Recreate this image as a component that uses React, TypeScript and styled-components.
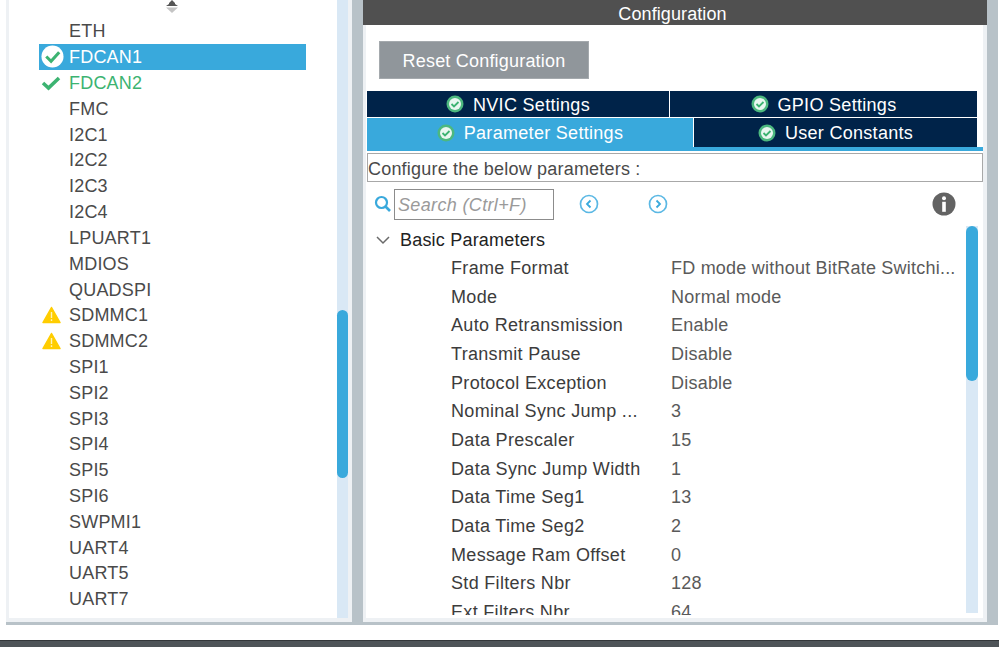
import styled, { createGlobalStyle } from 'styled-components';

const GlobalStyle = createGlobalStyle`
  html, body {
    margin: 0;
    padding: 0;
    background: #fff;
  }
  body {
    font-family: 'Liberation Sans', Arial, sans-serif;
  }
`;

const Page = styled.div`
  width: 999px;
  height: 647px;
  display: flex;
  flex-direction: column;
  overflow: hidden;
  background: #fff;
`;

const Workspace = styled.div`
  height: 625px;
  margin: 0 1px 0 6px;
  display: flex;
  background: #b8c2c8;
  padding-bottom: 3px;
  box-sizing: border-box;
`;

const BottomBar = styled.div`
  margin-top: 15px;
  height: 7px;
  background: #4e5458;
  border-top: 1px solid #33373a;
  box-sizing: border-box;
`;

const LeftPanel = styled.aside`
  width: 346px;
  background: #fff;
  border-left: 3px solid #eef1f4;
  border-bottom: 4px solid #eef1f4;
  box-sizing: border-box;
  display: flex;
  position: relative;
`;

const SortHandle = styled.svg`
  position: absolute;
  left: 151px;
  top: 0;
`;

const PeripheralList = styled.ul`
  flex: 1;
  list-style: none;
  margin: 0;
  padding: 18px 0 0 30px;
  overflow: hidden;
`;

const PeripheralRow = styled.li<{ $selected?: boolean; $done?: boolean }>`
  width: 267px;
  height: 25.82px;
  display: flex;
  align-items: center;
  font-size: 18px;
  letter-spacing: 0.2px;
  white-space: nowrap;
  background: ${(p) => (p.$selected ? '#39a9dc' : 'transparent')};
  color: ${(p) => (p.$selected ? '#fff' : p.$done ? '#3cb371' : '#4a4a4a')};
`;

const RowLabel = styled.span`
  padding-top: 2px;
`;

const StatusSlot = styled.span`
  width: 30px;
  flex: none;
  padding-left: 2px;
  box-sizing: border-box;
  display: flex;
  align-items: center;
`;

const ScrollTrack = styled.div<{ $width: number }>`
  width: ${(p) => p.$width}px;
  flex: none;
  background: #d9e8f5;
  position: relative;
`;

const ScrollThumb = styled.div<{ $top: number; $height: number }>`
  position: absolute;
  left: 0;
  right: 0;
  top: ${(p) => p.$top}px;
  height: ${(p) => p.$height}px;
  background: #39a9dc;
  border-radius: 6px;
`;

const LeftTrackWrap = styled.div`
  display: flex;
  padding-right: 4px;
  background: #eef1f4;
`;

const RightPanel = styled.section`
  width: 624px;
  margin-left: 11px;
  display: flex;
  flex-direction: column;
  overflow: hidden;
`;

const PanelTitle = styled.header`
  height: 25px;
  flex: none;
  background: #505050;
  color: #fff;
  font-size: 18px;
  letter-spacing: 0.1px;
  line-height: 28px;
  text-align: center;
  padding-right: 5px;
`;

const PanelBody = styled.div`
  flex: 1;
  min-height: 0;
  background: #fff;
  border: solid #eef1f4;
  border-width: 0 4px 4px 3px;
  padding-bottom: 3px;
  display: flex;
  flex-direction: column;
`;

const ResetButton = styled.button`
  width: 210px;
  height: 38px;
  margin: 16px 0 12px 13px;
  flex: none;
  border: 1px solid #a4a9ad;
  background: #90969b;
  color: #fff;
  font-family: inherit;
  font-size: 18px;
  letter-spacing: 0.2px;
  padding: 3px 0 0;
`;

const TabBlock = styled.div`
  flex: none;
  width: 616px;
  margin-left: 1px;
  border-bottom: 4px solid #39a9dc;
`;

const TabRow = styled.div<{ $columns: string }>`
  width: 610px;
  display: grid;
  grid-template-columns: ${(p) => p.$columns};
  column-gap: 1px;
  margin-bottom: 1px;

  &:last-child {
    margin-bottom: 0;
  }
`;

const Tab = styled.div<{ $active?: boolean; $height: number }>`
  height: ${(p) => p.$height}px;
  display: flex;
  align-items: center;
  justify-content: center;
  gap: 9px;
  font-size: 18px;
  letter-spacing: 0.3px;
  color: #fff;
  background: ${(p) => (p.$active ? '#39a9dc' : '#002349')};
`;

const TabText = styled.span`
  padding-top: 2px;
`;

const ConfigureBox = styled.div`
  flex: none;
  height: 29px;
  width: 616px;
  margin: 2px 0 0 1px;
  border: 1px solid #a8a8a8;
  box-sizing: border-box;
  color: #4a4a4a;
  font-size: 18px;
  line-height: 30px;
  letter-spacing: 0.2px;
`;

const SearchRow = styled.div`
  flex: none;
  height: 32px;
  margin-top: 6px;
  display: flex;
  align-items: center;
  padding-left: 8px;
`;

const SearchInput = styled.div`
  width: 160px;
  height: 31px;
  margin-left: 3px;
  border: 1px solid #8c8c8c;
  box-sizing: border-box;
  color: #9a9a9a;
  font-size: 18px;
  font-style: italic;
  letter-spacing: 0.35px;
  line-height: 31px;
  padding-left: 3px;
`;

const NavButton = styled.span<{ $gap: number }>`
  margin-left: ${(p) => p.$gap}px;
  display: flex;
`;

const InfoButton = styled.span`
  margin-left: auto;
  margin-right: 27px;
  display: flex;
`;

const ParamArea = styled.div`
  flex: 1;
  min-height: 0;
  display: flex;
`;

const ParamScroller = styled.div`
  flex: 1;
  overflow: hidden;
  padding-top: 6px;
`;

const GroupHeading = styled.div`
  height: 28px;
  display: flex;
  align-items: center;
  color: #222;
  font-size: 18px;
  letter-spacing: 0.2px;
  line-height: 26px;
  padding-left: 10px;
  gap: 10px;
`;

const ParamRow = styled.div`
  height: 28.7px;
  display: grid;
  grid-template-columns: 220px 1fr;
  align-items: center;
  padding-left: 85px;
  font-size: 18px;
  letter-spacing: 0.32px;
  color: #3c3c3c;
  white-space: nowrap;
`;

const ParamValue = styled.span`
  color: #5a5a5a;
  letter-spacing: 0.22px;
`;

const ParamTrack = styled.div`
  display: flex;
  width: 12px;
  margin: 6px 5px 2px 0;
`;

const GreenCheck = () => (
  <svg width="20" height="16" viewBox="0 0 20 16">
    <path d="M2 8 L7.5 13 L18 3" fill="none" stroke="#3cb371" strokeWidth="3.6" />
  </svg>
);

const SelectedCheck = () => (
  <svg width="23" height="23" viewBox="0 0 24 24">
    <circle cx="12" cy="12" r="11.5" fill="#fff" />
    <path d="M5.5 12 L10.5 17 L19 7.5" fill="none" stroke="#3cb371" strokeWidth="3.2" />
  </svg>
);

const Warning = () => (
  <svg width="20" height="18" viewBox="-1 0 20 18">
    <path d="M9.5 1.5 L18 16.5 L1 16.5 Z" fill="#ffcd00" stroke="#ffcd00" strokeWidth="1.5" strokeLinejoin="round" />
    <rect x="8.8" y="6" width="1.4" height="6" fill="#fff3b8" />
    <rect x="8.8" y="13.2" width="1.4" height="1.8" fill="#fff3b8" />
  </svg>
);

const TabCheck = () => (
  <svg width="18" height="18" viewBox="0 0 18 18">
    <circle cx="9" cy="9" r="8.5" fill="#4cb87f" />
    <circle cx="9" cy="9" r="6" fill="#e9f7f0" />
    <path d="M5.5 9 L8 11.5 L12.5 7" fill="none" stroke="#3cb371" strokeWidth="1.8" />
  </svg>
);

const SearchIcon = () => (
  <svg width="17" height="18" viewBox="0 0 17 18">
    <circle cx="7.5" cy="7.5" r="5.5" fill="none" stroke="#39a9dc" strokeWidth="2.2" />
    <path d="M11.5 11.5 L16 16" stroke="#39a9dc" strokeWidth="2.6" />
  </svg>
);

const NavIcon = ({ flip }: { flip?: boolean }) => (
  <svg width="20" height="20" viewBox="0 0 20 20">
    <circle cx="10" cy="10" r="8.5" fill="none" stroke="#5bb8e4" strokeWidth="1.7" />
    <path
      d={flip ? 'M8.5 6.5 L12 10 L8.5 13.5' : 'M11.5 6.5 L8 10 L11.5 13.5'}
      fill="none"
      stroke="#39a9dc"
      strokeWidth="1.8"
    />
  </svg>
);

const InfoIcon = () => (
  <svg width="24" height="24" viewBox="0 0 24 24">
    <circle cx="12" cy="12" r="11.5" fill="#636363" />
    <circle cx="12" cy="6.3" r="2" fill="#fff" />
    <rect x="10.2" y="9.8" width="3.6" height="10" fill="#fff" />
  </svg>
);

const Chevron = () => (
  <svg width="14" height="10" viewBox="0 0 14 10">
    <path d="M1 2 L7 8 L13 2" fill="none" stroke="#6a6a6a" strokeWidth="1.5" />
  </svg>
);

const peripherals = [
  { name: 'ETH' },
  { name: 'FDCAN1', status: 'selected' },
  { name: 'FDCAN2', status: 'done' },
  { name: 'FMC' },
  { name: 'I2C1' },
  { name: 'I2C2' },
  { name: 'I2C3' },
  { name: 'I2C4' },
  { name: 'LPUART1' },
  { name: 'MDIOS' },
  { name: 'QUADSPI' },
  { name: 'SDMMC1', status: 'warning' },
  { name: 'SDMMC2', status: 'warning' },
  { name: 'SPI1' },
  { name: 'SPI2' },
  { name: 'SPI3' },
  { name: 'SPI4' },
  { name: 'SPI5' },
  { name: 'SPI6' },
  { name: 'SWPMI1' },
  { name: 'UART4' },
  { name: 'UART5' },
  { name: 'UART7' },
];

const params = [
  ['Frame Format', 'FD mode without BitRate Switchi...'],
  ['Mode', 'Normal mode'],
  ['Auto Retransmission', 'Enable'],
  ['Transmit Pause', 'Disable'],
  ['Protocol Exception', 'Disable'],
  ['Nominal Sync Jump ...', '3'],
  ['Data Prescaler', '15'],
  ['Data Sync Jump Width', '1'],
  ['Data Time Seg1', '13'],
  ['Data Time Seg2', '2'],
  ['Message Ram Offset', '0'],
  ['Std Filters Nbr', '128'],
  ['Ext Filters Nbr', '64'],
];

const App = () => {
  return (
    <Page>
      <GlobalStyle />
      <Workspace>
        <LeftPanel>
          <SortHandle width="24" height="14" viewBox="0 0 24 14">
            <path d="M12 0 L15 3 L15 4 L18 6 L6 6 L9 4 L9 3 Z" fill="#555" />
            <path d="M6 7.5 L18 7.5 L12 13 Z" fill="#c4c4c4" />
          </SortHandle>
          <PeripheralList>
            {peripherals.map((item) => (
              <PeripheralRow
                key={item.name}
                $selected={item.status === 'selected'}
                $done={item.status === 'done'}
              >
                <StatusSlot>
                  {item.status === 'selected' && <SelectedCheck />}
                  {item.status === 'done' && <GreenCheck />}
                  {item.status === 'warning' && <Warning />}
                </StatusSlot>
                <RowLabel>{item.name}</RowLabel>
              </PeripheralRow>
            ))}
          </PeripheralList>
          <LeftTrackWrap>
            <ScrollTrack $width={11}>
              <ScrollThumb $top={310} $height={168} />
            </ScrollTrack>
          </LeftTrackWrap>
        </LeftPanel>
        <RightPanel>
          <PanelTitle>Configuration</PanelTitle>
          <PanelBody>
            <ResetButton>Reset Configuration</ResetButton>
            <TabBlock>
              <TabRow $columns="302px 307px">
                <Tab $height={26}>
                  <TabCheck />
                  <TabText>NVIC Settings</TabText>
                </Tab>
                <Tab $height={26}>
                  <TabCheck />
                  <TabText>GPIO Settings</TabText>
                </Tab>
              </TabRow>
              <TabRow $columns="326px 283px">
                <Tab $active $height={29}>
                  <TabCheck />
                  <TabText>Parameter Settings</TabText>
                </Tab>
                <Tab $height={29}>
                  <TabCheck />
                  <TabText>User Constants</TabText>
                </Tab>
              </TabRow>
            </TabBlock>
            <ConfigureBox>Configure the below parameters :</ConfigureBox>
            <SearchRow>
              <SearchIcon />
              <SearchInput>Search (Ctrl+F)</SearchInput>
              <NavButton $gap={25}>
                <NavIcon />
              </NavButton>
              <NavButton $gap={49}>
                <NavIcon flip />
              </NavButton>
              <InfoButton>
                <InfoIcon />
              </InfoButton>
            </SearchRow>
            <ParamArea>
              <ParamScroller>
                <GroupHeading>
                  <Chevron />
                  Basic Parameters
                </GroupHeading>
                {params.map(([label, value]) => (
                  <ParamRow key={label}>
                    <span>{label}</span>
                    <ParamValue>{value}</ParamValue>
                  </ParamRow>
                ))}
              </ParamScroller>
              <ParamTrack>
                <ScrollTrack $width={12}>
                  <ScrollThumb $top={0} $height={155} />
                </ScrollTrack>
              </ParamTrack>
            </ParamArea>
          </PanelBody>
        </RightPanel>
      </Workspace>
      <BottomBar />
    </Page>
  );
};

export default App;
